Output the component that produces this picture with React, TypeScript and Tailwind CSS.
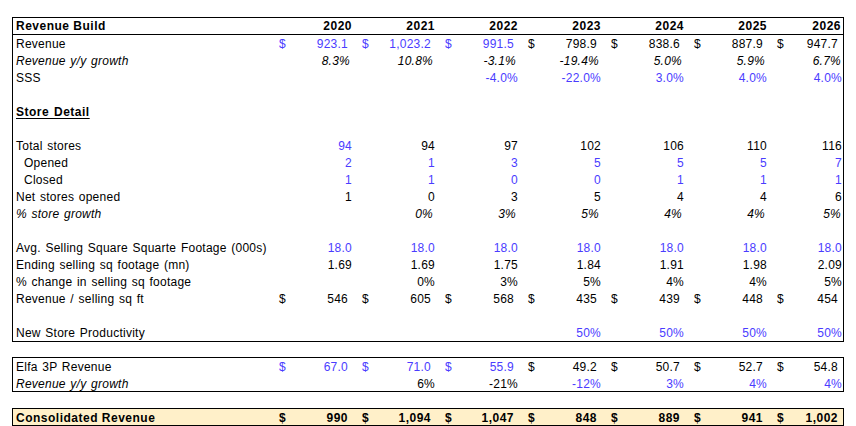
import React from 'react';

type Cell = {
  v: string;
  blue?: boolean;
  dollar?: 'blue' | 'black';
} | null;

type Kind = 'acct' | 'num' | 'ital';

interface RowDef {
  label: string;
  labelClass?: string;
  kind?: Kind;
  cells?: Cell[];
}

const BLUE = 'text-[#4a3cff]';

const pad = (kind: Kind, last: boolean) => {
  if (kind === 'acct') return last ? 'pr-[5px]' : 'pr-[11px]';
  if (kind === 'ital') return last ? 'pr-[2px]' : 'pr-[9px]';
  return last ? 'pr-[1px]' : 'pr-[7px]';
};

const b = (v: string): Cell => ({ v, blue: true });
const k = (v: string): Cell => ({ v });
const bd = (v: string): Cell => ({ v, blue: true, dollar: 'blue' });
const kd = (v: string): Cell => ({ v, dollar: 'black' });

const YEARS = ['2020', '2021', '2022', '2023', '2024', '2025', '2026'];

const MAIN: RowDef[] = [
  {
    label: 'Revenue',
    kind: 'acct',
    cells: [bd('923.1'), bd('1,023.2'), bd('991.5'), kd('798.9'), kd('838.6'), kd('887.9'), kd('947.7')],
  },
  {
    label: 'Revenue y/y growth',
    labelClass: 'italic',
    kind: 'ital',
    cells: ['8.3%', '10.8%', '-3.1%', '-19.4%', '5.0%', '5.9%', '6.7%'].map((v) => ({ v })),
  },
  {
    label: 'SSS',
    kind: 'num',
    cells: [null, null, b('-4.0%'), b('-22.0%'), b('3.0%'), b('4.0%'), b('4.0%')],
  },
  { label: '' },
  { label: 'Store Detail', labelClass: 'font-bold tracking-[0.5px] underline underline-offset-[2px]' },
  { label: '' },
  {
    label: 'Total stores',
    kind: 'num',
    cells: [b('94'), k('94'), k('97'), k('102'), k('106'), k('110'), k('116')],
  },
  {
    label: 'Opened',
    labelClass: 'pl-[11px]',
    kind: 'num',
    cells: ['2', '1', '3', '5', '5', '5', '7'].map(b),
  },
  {
    label: 'Closed',
    labelClass: 'pl-[11px]',
    kind: 'num',
    cells: ['1', '1', '0', '0', '1', '1', '1'].map(b),
  },
  {
    label: 'Net stores opened',
    kind: 'num',
    cells: ['1', '0', '3', '5', '4', '4', '6'].map(k),
  },
  {
    label: '% store growth',
    labelClass: 'italic',
    kind: 'ital',
    cells: [null, k('0%'), k('3%'), k('5%'), k('4%'), k('4%'), k('5%')],
  },
  { label: '' },
  {
    label: 'Avg. Selling Square Squarte Footage (000s)',
    kind: 'num',
    cells: YEARS.map(() => b('18.0')),
  },
  {
    label: 'Ending selling sq footage (mn)',
    kind: 'num',
    cells: ['1.69', '1.69', '1.75', '1.84', '1.91', '1.98', '2.09'].map(k),
  },
  {
    label: '% change in selling sq footage',
    kind: 'num',
    cells: [null, k('0%'), k('3%'), k('5%'), k('4%'), k('4%'), k('5%')],
  },
  {
    label: 'Revenue / selling sq ft',
    kind: 'acct',
    cells: ['546', '605', '568', '435', '439', '448', '454'].map(kd),
  },
  { label: '' },
  {
    label: 'New Store Productivity',
    kind: 'num',
    cells: [null, null, null, b('50%'), b('50%'), b('50%'), b('50%')],
  },
];

const ELFA: RowDef[] = [
  {
    label: 'Elfa 3P Revenue',
    kind: 'acct',
    cells: [bd('67.0'), bd('71.0'), bd('55.9'), kd('49.2'), kd('50.7'), kd('52.7'), kd('54.8')],
  },
  {
    label: 'Revenue y/y growth',
    labelClass: 'italic',
    kind: 'num',
    cells: [null, k('6%'), k('-21%'), b('-12%'), b('3%'), b('4%'), b('4%')],
  },
];

const GRID = 'grid grid-cols-[263px_repeat(6,83px)_69px]';

function Row({ row, h = 'h-[17px]', bold = false }: { row: RowDef; h?: string; bold?: boolean }) {
  const kind = row.kind ?? 'num';
  const indent = row.labelClass?.includes('pl-');
  return (
    <div
      className={`${GRID} ${h} pt-[1px] leading-[16px] ${
        bold ? 'font-bold tracking-[0.5px]' : 'tracking-[0.25px] [word-spacing:1px]'
      }`}
    >
      <div className={`whitespace-nowrap ${indent ? '' : 'pl-[3px]'} ${row.labelClass ?? ''}`}>
        {row.label}
      </div>
      {YEARS.map((y, i) => {
        const c = row.cells?.[i] ?? null;
        const last = i === YEARS.length - 1;
        return (
          <div key={y} className={`flex justify-between pl-[3px] ${pad(kind, last)}`}>
            <span className={c?.dollar === 'blue' ? BLUE : ''}>{c?.dollar ? '$' : ''}</span>
            <span className={`${c?.blue ? BLUE : ''} ${kind === 'ital' ? 'italic' : ''}`}>{c?.v ?? ''}</span>
          </div>
        );
      })}
    </div>
  );
}

export default function App() {
  return (
    <div
      className="w-[856px] h-[426px] overflow-hidden bg-white text-black text-[12px] pt-[17px] pl-[12px]"
      style={{ fontFamily: '"Liberation Sans", Arial, sans-serif' }}
    >
      {/* main block */}
      <div className="w-[832px] border border-black">
        <div
          className={`${GRID} h-[17px] pt-[1px] leading-[15px] border-b border-black font-bold tracking-[0.5px]`}
        >
          <div className="pl-[3px]">Revenue Build</div>
          {YEARS.map((y, i) => (
            <div key={y} className={`text-right ${i === YEARS.length - 1 ? 'pr-[2px]' : 'pr-[7px]'}`}>
              {y}
            </div>
          ))}
        </div>
        {MAIN.map((r, i) => (
          <Row key={i} row={r} />
        ))}
      </div>

      {/* Elfa */}
      <div className="w-[832px] border border-black mt-[15px]">
        <Row row={ELFA[0]} />
        <Row row={ELFA[1]} h="h-[16px]" />
      </div>

      {/* consolidated */}
      <div className="w-[832px] border border-black mt-[16px] bg-[#fff0c9]">
        <Row
          bold
          h="h-[16px]"
          row={{
            label: 'Consolidated Revenue',
            kind: 'acct',
            cells: ['990', '1,094', '1,047', '848', '889', '941', '1,002'].map(kd),
          }}
        />
      </div>
    </div>
  );
}
